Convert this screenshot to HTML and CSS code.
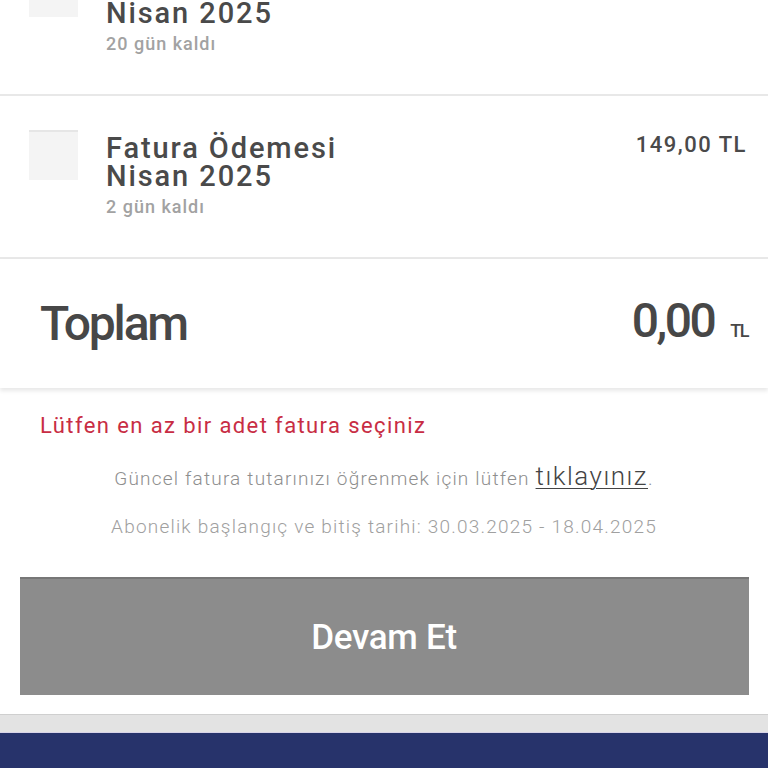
FILE: index.html
```html
<!DOCTYPE html>
<html lang="tr">
<head>
<meta charset="utf-8">
<link rel="stylesheet" href="styles.css">
</head>
<body>
<div class="page">
  <div class="list">
    <div class="row">
      <div class="check"></div>
      <div class="info">
        <div class="title">Fatura Ödemesi<br>Nisan 2025</div>
        <div class="sub">20 gün kaldı</div>
      </div>
      <div class="price">149,00 TL</div>
    </div>
    <div class="row">
      <div class="check"></div>
      <div class="info">
        <div class="title">Fatura Ödemesi<br>Nisan 2025</div>
        <div class="sub">2 gün kaldı</div>
      </div>
      <div class="price">149,00 TL</div>
    </div>
  </div>
  <div class="total">
    <div class="total-label">Toplam</div>
    <div class="total-amount"><span class="total-num">0,00</span><span class="total-cur">TL</span></div>
  </div>
  <div class="panel">
    <div class="error">Lütfen en az bir adet fatura seçiniz</div>
    <div class="note">Güncel fatura tutarınızı öğrenmek için lütfen <a class="link">tıklayınız</a>.</div>
    <div class="note note-dates">Abonelik başlangıç ve bitiş tarihi: 30.03.2025 - 18.04.2025</div>
    <button class="btn">Devam Et</button>
  </div>
  <div class="band"></div>
  <div class="footer"></div>
</div>
</body>
</html>
```
FILE: styles.css
```css
html, body {
  margin: 0;
  padding: 0;
  background: #ffffff;
}
body {
  font-family: Roboto, "Liberation Sans", sans-serif;
  width: 768px;
  height: 768px;
  overflow: hidden;
}
.page {
  display: flex;
  flex-direction: column;
}
.list {
  margin-top: -67px;
}
.row {
  height: 163px;
  box-sizing: border-box;
  border-bottom: 2px solid #e8e8e8;
  display: flex;
  align-items: flex-start;
  padding: 34px 21px 0 29px;
}
.check {
  width: 49px;
  height: 48px;
  background: #f4f4f4;
  border-top: 2px solid #e6e6e6;
  flex: none;
}
.info {
  margin-left: 28px;
  margin-top: 4px;
  flex: 1;
}
.title {
  font-size: 29px;
  line-height: 28px;
  font-weight: 500;
  color: #4a4a4a;
  letter-spacing: 1.9px;
}
.sub {
  margin-top: 6px;
  font-size: 18px;
  line-height: 22px;
  font-weight: 500;
  color: #a2a2a2;
  letter-spacing: 1px;
}
.price {
  margin-top: 2px;
  font-size: 22px;
  line-height: 26px;
  font-weight: 500;
  color: #4a4a4a;
  letter-spacing: 1.5px;
}
.total {
  height: 129px;
  box-sizing: border-box;
  display: flex;
  justify-content: space-between;
  align-items: flex-start;
  padding: 0 20px 0 40px;
  box-shadow: 0 3px 4px rgba(0, 0, 0, 0.09);
  position: relative;
  z-index: 1;
}
.total-label {
  margin-top: 37px;
  font-size: 48px;
  line-height: 56px;
  font-weight: 500;
  color: #474747;
  letter-spacing: -2.2px;
}
.total-amount {
  margin-top: 34px;
  display: flex;
  align-items: baseline;
  line-height: 56px;
}
.total-num {
  font-size: 48px;
  font-weight: 500;
  color: #474747;
  letter-spacing: -2.5px;
}
.total-cur {
  margin-left: 16px;
  font-size: 18px;
  font-weight: 500;
  color: #474747;
  letter-spacing: -1.5px;
}
.panel {
  display: flex;
  flex-direction: column;
  align-items: center;
  padding-bottom: 19px;
  border-bottom: 1px solid #cfcfcf;
}
.error {
  align-self: flex-start;
  margin: 24px 0 0 40px;
  font-size: 22px;
  line-height: 28px;
  color: #c82d44;
  letter-spacing: 1.4px;
}
.note {
  margin-top: 22px;
  font-size: 19px;
  line-height: 28px;
  font-weight: 300;
  color: #8e8e8e;
  letter-spacing: 1.2px;
}
.link {
  font-size: 26px;
  color: #444;
  text-decoration: underline;
  text-decoration-thickness: 1px;
  text-underline-offset: 3px;
  letter-spacing: 1.5px;
}
.note-dates {
  margin-top: 20px;
  color: #a0a0a0;
}
.btn {
  margin-top: 36px;
  width: 729px;
  height: 118px;
  border: none;
  border-top: 2px solid #777;
  background: #8c8c8c;
  color: #ffffff;
  font-family: Roboto, "Liberation Sans", sans-serif;
  font-size: 35px;
  font-weight: 500;
  letter-spacing: -0.3px;
  padding: 0;
}
.band {
  height: 17px;
  background: #e3e3e3;
  border-bottom: 1px solid #d8d4e8;
}
.footer {
  height: 40px;
  background: #27336b;
}
```
